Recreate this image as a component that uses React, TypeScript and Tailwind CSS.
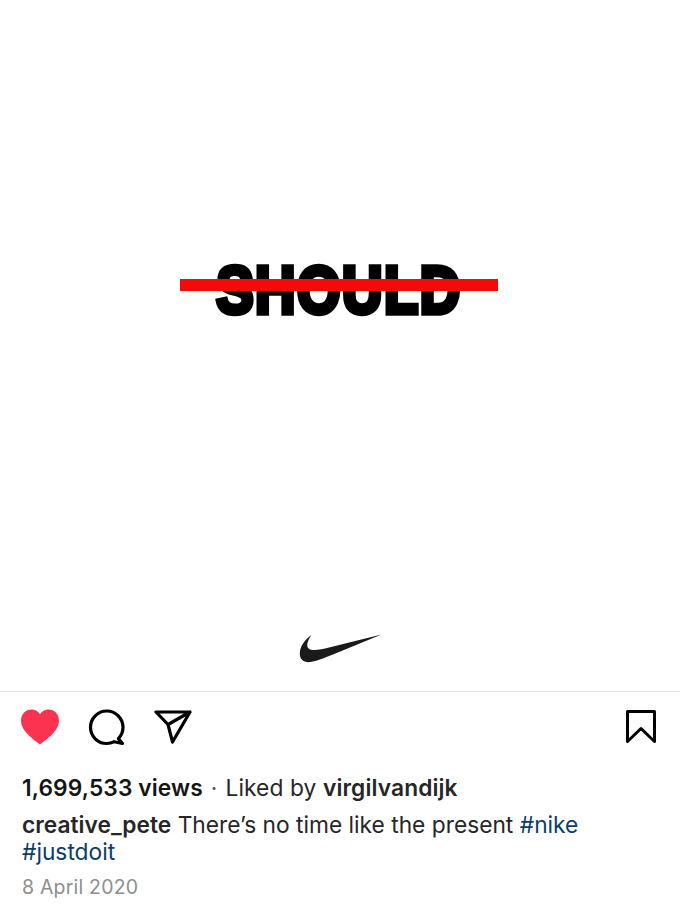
import React from 'react';

const Heart = () => (
  <svg width="40" height="36" viewBox="0 0 40 36" className="shrink-0">
    <path
      d="M20 35.500C14 30.500 1 22.500 1 11.500 1 5 5.800 0.500 11.500 0.500 15 0.500 18.300 2.300 20 5.300 21.700 2.300 25 0.500 28.500 0.500 34.200 0.500 39 5 39 11.500 39 22.500 26 30.500 20 35.500Z"
      fill="#fb3351"
    />
  </svg>
);

const Comment = () => (
  <svg width="38" height="38" viewBox="0 0 38 38" fill="none" className="shrink-0">
    <path
      d="M30.400 30.600C33.300 27.600 35 23.700 35 19.300 35 10.300 27.700 3 18.700 3 9.700 3 2.500 10.300 2.500 19.300 2.500 28.300 9.700 35.500 18.700 35.500 21.400 35.500 23.900 34.900 26.100 33.700L34.500 35.500Z"
      stroke="#000"
      strokeWidth="3.200"
      strokeLinejoin="round"
    />
  </svg>
);

const Send = () => (
  <svg width="38" height="34" viewBox="0 0 38 34" fill="none" className="shrink-0">
    <path
      d="M2 2H36L18.500 32 14 14.500 2 2ZM14 14.500 36 2"
      stroke="#000"
      strokeWidth="3.200"
      strokeLinejoin="round"
      strokeLinecap="round"
    />
  </svg>
);

const Bookmark = () => (
  <svg width="30" height="34" viewBox="0 0 30 34" fill="none" className="shrink-0">
    <path d="M1.500 1.500H28.500V31.500L15 18.500 1.500 31.500Z" stroke="#000" strokeWidth="3" strokeLinejoin="round" />
  </svg>
);

const Swoosh = () => (
  <svg width="84" height="32" viewBox="0 0 84 32">
    <path
      d="M12.500 2C6 6.500 1 13 0.800 20.500 0.700 27 5.500 29.800 11.500 29 17.500 28.200 25 25 34 21.500L82.500 1.500 30 14.500C24 16 18 17.500 13.500 17 9 16.500 7.500 13.500 8.500 10 9.300 7.300 10.500 4.500 12.500 2Z"
      fill="#1a1a1a"
    />
  </svg>
);

export default function App() {
  return (
    <div className="w-[680px] h-[917px] bg-white overflow-hidden font-['Inter','Liberation_Sans',sans-serif]">
      <div className="h-[691px] flex flex-col items-center">
        <div className="relative w-[318px] h-[56px] mt-[262px] -translate-x-[1px] flex items-center justify-center">
          <span className="font-['Liberation_Sans',sans-serif] font-bold text-[56px] leading-none tracking-[1.500px] text-black [-webkit-text-stroke:4.500px_#000] scale-y-[1.2] whitespace-nowrap">
            SHOULD
          </span>
          <div className="absolute left-0 right-0 top-[17px] h-[12px] bg-[#f50a0a]"></div>
        </div>
        <div className="mt-[315px] translate-x-[1px]">
          <Swoosh />
        </div>
      </div>

      <div className="border-t border-[#e4e4e4] px-[20px]">
        <div className="flex items-center justify-between pt-[16px] pr-[4px]">
          <div className="flex items-center gap-[28px]">
            <Heart />
            <div className="flex items-center gap-[28px]">
              <Comment />
              <Send />
            </div>
          </div>
          <Bookmark />
        </div>

        <div className="mt-[28px] pl-[2px] text-[22.750px] leading-[27px] text-[#262626]">
          <p className="whitespace-nowrap tracking-[0.1px]">
            <span className="font-semibold text-[#151515]">1,699,533 views</span>
            <span className="mx-[8px] text-[#555]">·</span>
            <span>Liked by </span>
            <span className="font-semibold">virgilvandijk</span>
          </p>
          <p className="mt-[10px] whitespace-nowrap">
            <span className="font-semibold">creative_pete</span>
            <span> There’s no time like the present </span>
            <span className="text-[#0c3c6b]">#nike</span>
          </p>
          <p className="text-[#0c3c6b]">#justdoit</p>
          <p className="mt-[9px] text-[19.500px] text-[#8e8e8e] tracking-[0.2px]">8 April 2020</p>
        </div>
      </div>
    </div>
  );
}
